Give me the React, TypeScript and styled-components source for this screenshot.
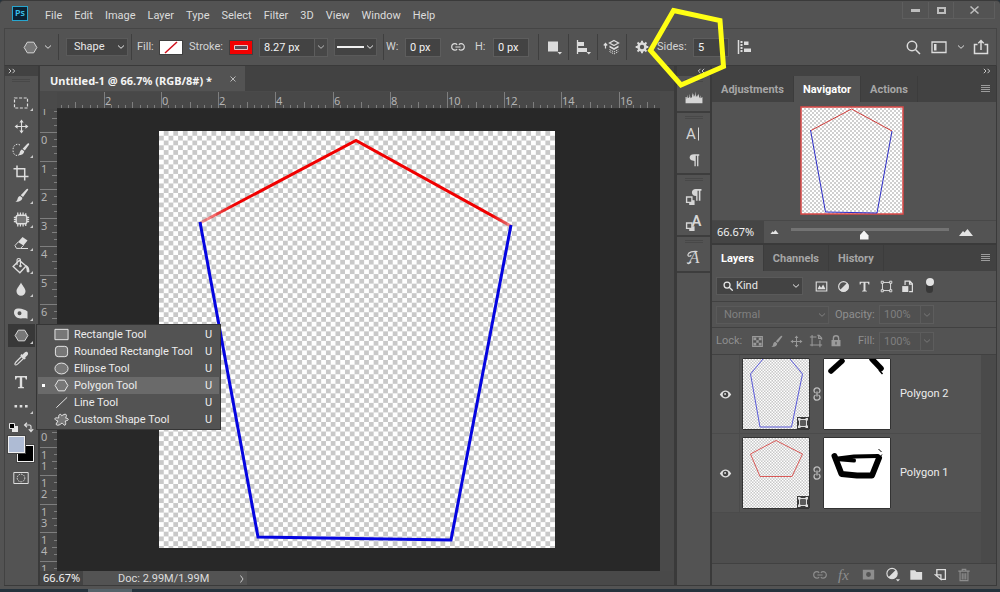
import React from "react";
import styled, { createGlobalStyle, css } from "styled-components";

const ui = `Roboto, "Noto Sans", sans-serif`;
const wide = `"Noto Sans", "Open Sans", sans-serif`;

const GlobalStyle = createGlobalStyle`
  * { box-sizing: border-box; }
  html, body { margin: 0; background: #262626; }
  body { font: 11px/16px ${ui}; color: #dcdcdc; overflow: hidden; }
  button, input, select { font: inherit; color: inherit; }
  button { padding: 0; margin: 0; border: 0; background: none; display: flex; align-items: center; justify-content: center; }
  svg { display: block; flex: none; }
`;

/* ---------- shell ---------- */
const Screen = styled.div`
  height: 100vh;
  display: flex;
  flex-direction: column;
  background: #25323c;
`;
const Taskbar = styled.div`
  flex: none;
  height: 3px;
  background: linear-gradient(90deg, #25323c 88px, #55626a 88px, #55626a 132px, #25323c 132px);
`;
const Window = styled.div`
  flex: 1;
  display: flex;
  flex-direction: column;
  min-height: 0;
  padding: 0 3px 3px 4px;
  background: #535353;
  border-top: 1px solid #3a3a3a;
  border-radius: 4px 4px 0 0;
`;
const MenuBar = styled.header`
  flex: none;
  height: 27px;
  display: flex;
  align-items: center;
  padding-left: 8px;
`;
const Logo = styled.div`
  width: 16px;
  height: 15px;
  margin: 0 17px 3px 0;
  border: 1px solid #27a6cf;
  background: #0b2233;
  color: #3cc1ea;
  font: 600 9px/12px ${wide};
  text-align: center;
`;
const Menus = styled.nav`
  display: flex;
  gap: 12px;
  padding-top: 2px;
`;
const MenuButton = styled.button`
  line-height: 18px;
`;
const WindowButtons = styled.div`
  margin: 0 2px 8px auto;
  display: flex;
  border: 1px solid #5e5e5e;
  border-top: 0;
`;
const WindowButton = styled.button<{ $w: number }>`
  width: ${(p) => p.$w}px;
  height: 16px;
  color: #bdbdbd;
  & + & { border-left: 1px solid #5e5e5e; }
`;

/* ---------- options bar ---------- */
const OptionsBar = styled.div`
  flex: none;
  height: 38px;
  display: flex;
  align-items: center;
  border: 1px solid #454545;
  border-bottom-color: #3a3a3a;
`;
const Cell = styled.div<{ $w: number; $pad?: number; $divided?: boolean; $center?: boolean }>`
  flex: none;
  width: ${(p) => p.$w}px;
  height: 26px;
  display: flex;
  align-items: center;
  padding-left: ${(p) => p.$pad ?? 0}px;
  ${(p) => p.$center && css`justify-content: center;`}
  ${(p) => p.$divided && css`border-right: 1px solid #3f3f3f;`}
`;
const Label = styled.label<{ $w?: number; $dim?: boolean }>`
  flex: none;
  ${(p) => p.$w && css`width: ${p.$w}px;`}
  color: ${(p) => (p.$dim ? "#8f8f8f" : "#d4d4d4")};
`;
const Swatch = styled.button<{ $gap: number }>`
  width: 24px;
  height: 15px;
  margin-right: ${(p) => p.$gap}px;
  border: 1px solid #3f3f3f;
`;
const Field = styled.input<{ $w: number; $dim?: boolean }>`
  width: ${(p) => p.$w}px;
  height: 19px;
  padding: 0 0 0 4px;
  border: 1px solid ${(p) => (p.$dim ? "#5c5c5c" : "#5d5d5d")};
  background: ${(p) => (p.$dim ? "#505050" : "#434343")};
  color: ${(p) => (p.$dim ? "#7f7f7f" : "#f2f2f2")};
  border-radius: 0;
  outline: 0;
`;
const StepButton = styled.button<{ $dim?: boolean }>`
  width: 13px;
  height: 19px;
  border: 1px solid #5d5d5d;
  border-left: 0;
  background: ${(p) => (p.$dim ? "#505050" : "#474747")};
  color: ${(p) => (p.$dim ? "#777" : "#b8b8b8")};
`;
const SelectBox = styled.span<{ $w: number; $dim?: boolean }>`
  display: grid;
  grid-template-columns: 1fr 10px;
  align-items: center;
  flex: none;
  width: ${(p) => p.$w}px;
  height: 18px;
  border: 1px solid #5a5a5a;
  background: ${(p) => (p.$dim ? "#505050" : "#434343")};
  color: ${(p) => (p.$dim ? "#808080" : "#e8e8e8")};
  > * { grid-row: 1; }
  > svg { grid-column: 2; pointer-events: none; }
  > svg.lead { grid-column: 1; margin-left: 6px; }
  > svg.line { grid-column: 1; margin-left: 2px; }
`;
const Select = styled.select<{ $pad: number }>`
  grid-column: 1 / 3;
  width: 100%;
  height: 16px;
  padding: 0 0 0 ${(p) => p.$pad}px;
  border: 0;
  background: transparent;
  appearance: none;
  outline: 0;
`;
const RightTools = styled.div`
  margin-left: auto;
  padding-right: 5px;
  display: flex;
  align-items: center;
  gap: 6px;
`;
const Callout = styled.svg`
  position: absolute;
  left: -10px;
  top: -37px;
  z-index: 5;
  pointer-events: none;
`;
const CalloutAnchor = styled.div`
  position: relative;
  display: flex;
  align-items: center;
`;

/* ---------- columns ---------- */
const Workspace = styled.main`
  flex: 1;
  display: flex;
  min-height: 0;
  background: #3a3a3a;
  border-bottom: 1px solid #3a3a3a;
`;
const ColumnHead = styled.div<{ $right?: boolean }>`
  flex: none;
  height: 10px;
  display: flex;
  align-items: center;
  justify-content: ${(p) => (p.$right ? "flex-end" : "flex-start")};
  padding: 0 5px 0 3px;
  background: #424242;
  color: #c8c8c8;
`;
const ToolColumn = styled.aside`
  flex: none;
  width: 34px;
  margin-right: 2px;
  background: #535353;
  border-left: 1px solid #424242;
`;
const Grip = styled.div<{ $m?: string }>`
  width: 18px;
  height: 3px;
  margin: ${(p) => p.$m ?? "3px auto 0"};
  border: solid #484848;
  border-width: 1px 0;
`;
const ToolGroups = styled.div`
  display: flex;
  flex-direction: column;
  gap: 1px;
  margin-top: 9px;
`;
const ToolSlot = styled.div<{ $active?: boolean; $more?: boolean }>`
  position: relative;
  width: 27px;
  height: 23px;
  margin-left: 3px;
  background: ${(p) => (p.$active ? "#383838" : "transparent")};
  color: #dedede;
  ${(p) => p.$more && css`
    &::after {
      content: "";
      position: absolute;
      right: 2px;
      bottom: 3px;
      border: solid #c9c9c9;
      border-width: 0 0 3px 3px;
      border-left-color: transparent;
    }
  `}
`;
const ToolButton = styled.button`
  width: 26px;
  height: 23px;
`;
const Flyout = styled.div`
  position: absolute;
  z-index: 4;
  left: 28px;
  top: 0;
  width: 185px;
  padding: 1px;
  background: #535353;
  border: 1px solid #353535;
`;
const FlyoutItem = styled.button<{ $on?: boolean }>`
  width: 100%;
  height: 17px;
  display: grid;
  grid-template-columns: 16px 20px 1fr 14px;
  justify-items: start;
  background: ${(p) => (p.$on ? "#6a6a6a" : "transparent")};
  color: #ececec;
`;
const Dot = styled.i<{ $on?: boolean }>`
  width: 3px;
  height: 3px;
  margin-left: 4px;
  background: ${(p) => (p.$on ? "#fff" : "transparent")};
`;
const ColorArea = styled.div`
  padding: 5px 0 0 3px;
  color: #dedede;
`;
const MiniRow = styled.div`
  display: flex;
  gap: 4px;
  margin: 0 0 3px;
`;
const Colors = styled.div`
  display: grid;
  grid-template: repeat(2, 9px) / repeat(2, 9px);
  margin-bottom: 16px;
`;
const ColorChip = styled.button<{ $c: string; $back?: boolean }>`
  width: 17px;
  height: 17px;
  border: 1px solid #f0f0f0;
  outline: 1px solid #444;
  background: ${(p) => p.$c};
  grid-area: ${(p) => (p.$back ? "2 / 2" : "1 / 1")};
  z-index: ${(p) => (p.$back ? 0 : 1)};
`;

/* ---------- document ---------- */
const DocumentColumn = styled.section`
  flex: 1;
  min-width: 0;
  display: flex;
  flex-direction: column;
  background: #494949;
`;
const DocTabs = styled.div`
  flex: none;
  height: 25px;
  display: flex;
  background: #424242;
`;
const DocTab = styled.button`
  height: 25px;
  padding: 4px 9px 0 10px;
  gap: 18px;
  background: #535353;
  color: #f4f4f4;
  font: 700 11px/16px ${wide};
  > svg { margin-bottom: 4px; }
`;
const View = styled.div`
  flex: 1;
  min-height: 0;
  display: grid;
  grid-template: 17px minmax(0, 1fr) / 17px minmax(0, 1fr) 14px;
  background: #4a4a4a;
  padding-top: 1px;
  overflow: hidden;
`;
const RulerBox = styled.div<{ $vertical?: boolean }>`
  overflow: hidden;
  min-width: 0;
  min-height: 0;
  background: #484848;
  ${(p) => (p.$vertical ? css`grid-area: 2 / 1;` : css`grid-area: 1 / 2;`)}
  text { font: 11px ${wide}; fill: #b4b4b4; }
`;
const Pasteboard = styled.div`
  grid-area: 2 / 2;
  min-height: 0;
  background: #282828;
  overflow: hidden;
  padding: 22px 0 0 102px;
`;
const StatusBar = styled.footer`
  flex: none;
  height: 14px;
  display: flex;
  align-items: center;
  line-height: 14px;
  background: #494949;
`;
const ZoomValue = styled.span`
  width: 43px;
  padding-left: 3px;
  background: #434343;
  color: #f2f2f2;
  font-family: ${wide};
  white-space: nowrap;
`;
const DocInfo = styled.button`
  width: 164px;
  height: 14px;
  padding: 2px 3px 0 35px;
  justify-content: space-between;
  background: #535353;
`;

/* ---------- right side ---------- */
const IconColumn = styled.aside`
  flex: none;
  width: 33px;
  margin: 0 2px 0 3px;
  background: #535353;
`;
const IconGroup = styled.div<{ $h: number }>`
  display: flow-root;
  height: ${(p) => p.$h}px;
  border-bottom: 2px solid #3d3d3d;
  color: #d6d6d6;
`;
const IconButton = styled.button<{ $h?: number; $w?: number; $dim?: boolean }>`
  width: ${(p) => (p.$w ? p.$w + "px" : "100%")};
  height: ${(p) => p.$h ?? 26}px;
  ${(p) => p.$dim && css`color: #8d8d8d;`}
`;
const Panels = styled.aside`
  flex: none;
  width: 284px;
  display: flex;
  flex-direction: column;
  margin-right: 1px;
`;
const PanelTabs = styled.div`
  flex: none;
  height: 26px;
  display: flex;
  background: #424242;
  > svg { margin: 9px 6px 0 auto; }
`;
const PanelTab = styled.button<{ $on?: boolean }>`
  height: 26px;
  padding: 2px 9px 0;
  font-weight: 700;
  color: ${(p) => (p.$on ? "#fff" : "#a6a6a6")};
  background: ${(p) => (p.$on ? "#535353" : "transparent")};
  border-right: 1px solid #3c3c3c;
`;
const NavBody = styled.div`
  flex: none;
  height: 118px;
  padding-top: 4px;
  display: flex;
  justify-content: center;
  background: #535353;
  > svg { margin-right: 5px; }
`;
const NavFoot = styled.div`
  flex: none;
  height: 23px;
  display: flex;
  align-items: center;
  background: #535353;
  border-top: 1px solid #484848;
  margin-bottom: 2px;
  color: #e0e0e0;
`;
const NavZoom = styled.span`
  width: 52px;
  height: 22px;
  padding-left: 5px;
  font-family: ${wide};
  line-height: 22px;
  background: #454545;
  color: #f2f2f2;
`;
const Slider = styled.input`
  width: 158px;
  height: 16px;
  margin: 0 9px 0 7px;
  appearance: none;
  background: linear-gradient(#737373, #737373) 0 4px / 100% 3px no-repeat;
  &::-webkit-slider-thumb {
    appearance: none;
    width: 9px;
    height: 9px;
    margin-top: 6px;
    background: #f4f4f4;
    clip-path: polygon(50% 0, 100% 55%, 100% 100%, 0 100%, 0 55%);
  }
`;
const LayerBar = styled.div<{ $h: number }>`
  flex: none;
  height: ${(p) => p.$h}px;
  display: flex;
  align-items: center;
  padding-left: 4px;
  background: #535353;
  border-bottom: 1px solid #414141;
`;
const FilterIcons = styled.div`
  display: flex;
  gap: 6px;
  margin-left: 11px;
  color: #dedede;
`;
const LockIcons = styled.div`
  width: 93px;
  display: flex;
  justify-content: space-between;
  margin-right: 15px;
  color: #9a9a9a;
`;
const Toggle = styled.button`
  width: 7px;
  height: 15px;
  margin: 0 0 2px 11px;
  border-radius: 4px;
  background: #383838;
  align-items: flex-start;
  &::before { content: ""; flex: none; width: 8px; height: 8px; border-radius: 4px; background: #e2e2e2; }
`;
const LayerList = styled.div`
  flex: 1;
  min-height: 0;
  padding-right: 15px;
  background: linear-gradient(270deg, #4a4a4a 15px, #4e4e4e 15px);
`;
const LayerRow = styled.div`
  height: 79px;
  display: flex;
  align-items: center;
  background: #535353;
  border-bottom: 1px solid #4b4b4b;
`;
const Eye = styled.button`
  width: 28px;
  height: 78px;
  border-right: 1px solid #4b4b4b;
`;
const Thumb = styled.div<{ $ml?: number }>`
  position: relative;
  width: 68px;
  height: 72px;
  margin-left: ${(p) => p.$ml ?? 0}px;
  border: 1px solid #333;
  border-radius: 1px;
  background: #fff;
`;
const Badge = styled.span`
  position: absolute;
  right: 0;
  bottom: 0;
  width: 12px;
  height: 12px;
  background: #3a3a3a;
  color: #dedede;
`;
const LayerName = styled.span`
  margin-left: 9px;
  color: #ececec;
`;
const LayerFoot = styled.div`
  flex: none;
  height: 22px;
  display: flex;
  align-items: center;
  justify-content: flex-end;
  padding-right: 20px;
  background: #535353;
  border-top: 1px solid #414141;
  color: #dedede;
`;

/* ---------- icons ---------- */
type IconProps = { s?: number; w?: number; className?: string; children: React.ReactNode };
const Icon = ({ s = 16, w = 1, className, children }: IconProps) => (
  <svg className={className} width={s} height={s} viewBox="0 0 16 16" fill="none" stroke="currentColor" strokeWidth={w}>
    {children}
  </svg>
);
const Chevron = () => (
  <svg width="8" height="6" viewBox="0 0 8 6" fill="none" stroke="currentColor"><path d="M1 1.5 4 4.3 7 1.5" /></svg>
);
const Double = ({ left }: { left?: boolean }) => (
  <svg width="8" height="6" viewBox="0 0 8 6" fill="none" stroke="currentColor">
    <path d={left ? "M7.2.8 5 3l2.200 2.200M3.500.8 1.300 3l2.200 2.200" : "M.8.8 3 3 .8 5.200M4.500.8 6.700 3 4.500 5.200"} />
  </svg>
);
const Burger = () => (
  <svg width="9" height="8" viewBox="0 0 9 8" stroke="#9c9c9c"><path d="M0 .5h9M0 2.5h9M0 4.5h9M0 6.5h9" /></svg>
);
const Hexagon = ({ s = 16 }: { s?: number }) => (
  <Icon s={s}><path d="M4.600 2.300h6.800L14.800 8l-3.400 5.700H4.600L1.200 8z" fill="#777" /></Icon>
);
const MoveIcon = ({ s = 16 }: { s?: number }) => (
  <Icon s={s} w={1.2}><path d="M8 2v12M2 8h12" /><path d="M8 .6 10.3 3.8H5.7zM8 15.4l2.3-3.2H5.7zM.6 8l3.2-2.3v4.6zM15.4 8l-3.2-2.3v4.6z" fill="currentColor" stroke="none" /></Icon>
);
const BrushIcon = ({ s = 16 }: { s?: number }) => (
  <Icon s={s}><path d="M14.8 1c.5.4.4.8 0 1.5L9.6 9.6 7.2 7.7 13 1.6c.7-.7 1.300-1 1.800-.6zM6.500 8.400l2.400 2c0 2.500-2.500 4.600-7.400 4.300 2-.8 2-2 2.500-3.700.4-1.500 1.300-2.300 2.500-2.600z" fill="currentColor" stroke="none" /></Icon>
);
const LinkIcon = ({ s = 14 }: { s?: number }) => (
  <Icon s={s} w={1.400}><path d="M7 5.500C6.300 4.600 5.500 4.200 4.500 4.200a3.600 3.600 0 0 0 0 7.400c1 0 1.800-.4 2.500-1.300M9 5.500c.7-.9 1.500-1.300 2.500-1.300a3.600 3.600 0 0 1 0 7.400c-1 0-1.800-.4-2.500-1.300M5 8h6" /></Icon>
);
const LayerLink = () => (
  <svg width="8" height="14" viewBox="0 0 8 14" fill="none" stroke="#bdbdbd" strokeWidth="1.300">
    <path d="M2.500 6C1.500 5.500 1 4.800 1 3.800a3 3 0 0 1 6 0C7 4.800 6.500 5.500 5.500 6M2.500 8C1.500 8.500 1 9.200 1 10.200a3 3 0 0 0 6 0c0-1-.5-1.700-1.500-2.200M4 4.500v5" />
  </svg>
);
const TypeIcon = ({ s = 16 }: { s?: number }) => (
  <Icon s={s}><path d="M2 2h12v3.600h-1.200c-.2-1.500-.6-2.100-2-2.100H9.200v8.600c0 .9.400 1.100 1.800 1.200v.9H5v-.9c1.400-.1 1.800-.3 1.800-1.200V3.500H5.200c-1.400 0-1.800.6-2 2.100H2z" fill="currentColor" stroke="none" /></Icon>
);
const FrameIcon = ({ s = 14 }: { s?: number }) => (
  <Icon s={s} w={1.200}><path d="M3 3h10v10H3z" /><path d="M1.500 1.500h2.600v2.600H1.500zM11.900 1.500h2.600v2.600h-2.600zM1.500 11.900h2.600v2.600H1.500zM11.900 11.900h2.600v2.600h-2.600z" fill="#535353" /></Icon>
);
const BadgeFrame = () => (
  <svg width="12" height="12" viewBox="0 0 12 12" fill="none" stroke="currentColor">
    <path d="M2.500 2.500h7v7h-7z" fill="#5a5a5a" />
    <path d="M1 1h2.500v2.500H1zM8.500 1H11v2.500H8.500zM1 8.500h2.500V11H1zM8.500 8.500H11V11H8.500z" fill="currentColor" stroke="none" />
  </svg>
);
const AdjustIcon = ({ s = 14 }: { s?: number }) => (
  <Icon s={s} w={1.400}><circle cx="8" cy="8" r="6" /><path d="M12.600 3.400A6.500 6.500 0 1 1 3.400 12.600z" fill="currentColor" stroke="none" /></Icon>
);
const EyeIcon = () => (
  <Icon s={13}><path d="M1 8C3 4.500 5.500 3 8 3s5 1.500 7 5c-2 3.500-4.500 5-7 5s-5-1.500-7-5z" fill="#e2e2e2" stroke="none" /><circle cx="8" cy="8" r="3.400" fill="#444" stroke="none" /><circle cx="7.500" cy="7.300" r="1.200" fill="#ddd" stroke="none" /></Icon>
);
const LassoBrush = () => (
  <svg width="18" height="16" viewBox="0 0 18 16" fill="none" stroke="currentColor">
    <path d="M8 3C5 1 1 3 1 8s3.500 6.500 6 4.800" strokeDasharray="1.500 1.300" />
    <path d="M17 1.500c.4.500.2 1-.2 1.600l-4 5.400-2.200-1.700 4.700-5c.6-.6 1.200-.8 1.700-.3zM10 7.500l2.200 1.800c-.2 2.700-2.300 4-6.200 3.900 1.400-.8 1.400-1.800 1.800-3 .4-1.500 1.200-2.400 2.200-2.700z" fill="currentColor" stroke="none" />
  </svg>
);
const CropIcon = () => <Icon w={1.500}><path d="M4 .5v11h11.500M.5 3.700h11.200V15.500" /></Icon>;
const PatchIcon = () => (
  <Icon s={17}><rect x="3" y="4" width="10" height="8" rx="2" fill="#777" strokeWidth="1.300" /><path d="M4.500 1.500V4M7 1.500V4M9.500 1.500V4M12 2v2M4.500 12v2.500M7 12v2.500M9.500 12v2.500M12 12v2M.8 6H3M.8 8H3M.8 10H3M13 6h2.200M13 8h2.200M13 10h2.200" strokeWidth="1.200" /></Icon>
);
const EraserIcon = () => (
  <Icon><path d="M9.500 2 14.500 5.500 10.500 10.500 5 7z" fill="currentColor" stroke="none" /><path d="M5.200 7 2 10.500l1.500 2.900h4l3-3" /><path d="M7.500 13.500H15" /></Icon>
);
const BucketIcon = () => (
  <Icon s={18}><path d="M6.500 3 12.500 8 7 14 1 8.500z" strokeWidth="1.200" /><path d="M7.500 8V2.500c0-1.500-3-1.500-3 0V7" /><path d="M12 7c3 1 3.500 3 3.500 6-1.200 1.500-2.800.5-2.500-1.500z" fill="currentColor" stroke="none" /><circle cx="7.500" cy="8" r="1.200" fill="currentColor" stroke="none" /></Icon>
);
const DropIcon = () => <Icon><path d="M8 1.500c.8 2.600 4.500 5.500 4.500 8.800a4.500 4.500 0 0 1-9 0C3.500 7 7.200 4.100 8 1.500z" fill="currentColor" stroke="none" /></Icon>;
const SpongeIcon = () => <Icon><path fillRule="evenodd" d="M1 7.500C1 4.500 3 3 6 3.500c3 .4 6.500 1 8.500 3v7.300c-2-.8-4-.5-6.500-.4C4 13.500 1 11 1 7.500zM6.500 6.300a2 2 0 1 0 0 4 2 2 0 0 0 0-4z" fill="currentColor" stroke="none" /></Icon>;
const DropperIcon = () => (
  <Icon><path d="M8.500 5.500 3 11c-.5.600-1.500 2-1 2.700.6.600 2.200-.3 2.800-.8l5.700-5.500z" strokeWidth="1.200" /><path d="M14.500 1.300c1 1 .6 2.300-.3 3.200l-2 2 .6.800-1.300 1.200L7.300 4.400l1.200-1.300.9.700 2-2c.9-.9 2.200-1.400 3.100-.5z" fill="currentColor" stroke="none" /></Icon>
);
const DotsIcon = () => <Icon><path d="M1.500 7h2.600v2.500H1.500zM6.700 7h2.600v2.500H6.700zM12 7h2.600v2.500H12z" fill="currentColor" stroke="none" /></Icon>;
const GearIcon = () => (
  <Icon s={14}><circle cx="8" cy="8" r="4" strokeWidth="3" /><path d="M8 .8V4M8 12v3.200M.8 8H4M12 8h3.200M2.900 2.900 5 5M11 11l2.100 2.100M13.100 2.900 11 5M5 11l-2.100 2.100" strokeWidth="2.200" /></Icon>
);
const SubMark = () => <path d="M11.500 13h4.500l-2.200 2.500z" fill="currentColor" stroke="none" />;
const Italic = ({ s, children, dx = 0 }: { s: number; dx?: number; children: string }) => (
  <text x={dx} y="13" stroke="none" fill="currentColor" fontSize={s} fontFamily="Liberation Serif, serif" fontStyle="italic">{children}</text>
);
const StyleChip = () => <><path d="M4.500 12h4v4h-4z" fill="currentColor" /><path d="M1.500 8.500h5v5h-5z" fill="#535353" strokeWidth="1.300" /></>;

const tools: { name: string; icon: React.ReactNode; more?: boolean }[][] = [
  [{ name: "Marquee", more: true, icon: <Icon><rect x="1.500" y="3" width="13" height="10" strokeDasharray="3 1.600" strokeWidth="1.200" /></Icon> }],
  [
    { name: "Move", icon: <MoveIcon s={15} /> },
    { name: "Quick Selection", more: true, icon: <LassoBrush /> },
    { name: "Crop", icon: <CropIcon /> },
    { name: "Brush", more: true, icon: <BrushIcon s={15} /> },
  ],
  [
    { name: "Patch", more: true, icon: <PatchIcon /> },
    { name: "Eraser", more: true, icon: <EraserIcon /> },
    { name: "Paint Bucket", more: true, icon: <BucketIcon /> },
    { name: "Blur", more: true, icon: <DropIcon /> },
  ],
  [
    { name: "Sponge", more: true, icon: <SpongeIcon /> },
    { name: "Polygon", more: true, icon: <Hexagon s={15} /> },
    { name: "Eyedropper", icon: <DropperIcon /> },
    { name: "Type", icon: <TypeIcon /> },
  ],
  [{ name: "More tools", more: true, icon: <DotsIcon /> }],
];

const shapeTools: { name: string; icon: React.ReactNode; on?: boolean }[] = [
  { name: "Rectangle Tool", icon: <Icon s={15}><path d="M1 2.500h14v11H1z" fill="#777" /></Icon> },
  { name: "Rounded Rectangle Tool", icon: <Icon s={15}><rect x="1.500" y="2.500" width="13" height="11" rx="3" fill="#777" /></Icon> },
  { name: "Ellipse Tool", icon: <Icon s={15}><ellipse cx="8" cy="8" rx="7" ry="5.800" fill="#777" /></Icon> },
  { name: "Polygon Tool", icon: <Hexagon s={15} />, on: true },
  { name: "Line Tool", icon: <Icon s={15}><path d="M2.500 13.500 14 2.500" /></Icon> },
  { name: "Custom Shape Tool", icon: <Icon s={15}><path d="M5 4.500c0-2 2.500-3 3.200-.5 1.300-.7 3.500-2.500 4.800-1.200 1 1-.5 2.400-.5 3.700 2 0 3 .8 2.600 1.900-.5 1-2.300.7-3.100 1.200.5 2 1 4.400-.5 4.500-1.300 0-1.800-1.800-3-2.300-1.500 1.500-4.500 3.200-6 1.800-.9-1 1-2.500 1.700-4C2.500 9.200.8 8.300 1 7c.4-1.500 2.500-.6 4-.6z" fill="#777" /></Icon> },
];

const menus = ["File", "Edit", "Image", "Layer", "Type", "Select", "Filter", "3D", "View", "Window", "Help"];

/* ---------- drawings ---------- */
const Checker = ({ id, p, c = "#c9c9c9" }: { id: string; p: number; c?: string }) => (
  <pattern id={id} width={p} height={p} patternUnits="userSpaceOnUse">
    <rect width={p} height={p} fill="#fff" />
    <path d={`M${p / 2} 0h${p / 2}v${p / 2}h-${p / 2}zM0 ${p / 2}h${p / 2}v${p / 2}H0z`} fill={c} />
  </pattern>
);

const unit = 28.6;
const topLabels = [2, 0, 2, 4, 6, 8, 10, 12, 14, 16];
const sideLabels = ["1", "0", "1", "2", "3", "4", "5", "6", "7", "8", "9", "10", "11", "12", "13", "14", "1"];
const HRuler = () => (
  <svg width="1600" height="17" stroke="#7e7e7e">
    {Array.from({ length: 230 }, (_, i) => {
      const x = Math.round(104 - 4 * unit + (i * unit) / 4) + 0.5;
      const len = i % 8 === 0 ? 17 : i % 4 === 0 ? 6 : 3;
      return <path key={i} d={`M${x} ${16 - len}V16`} />;
    })}
    {topLabels.map((n, i) => (
      <text key={i} x={Math.round(105 + (i - 1) * 2 * unit)} y="13" stroke="none">{n}</text>
    ))}
    <path d="M0 16.500h1600" stroke="#2c2c2c" />
  </svg>
);
const VRuler = () => (
  <svg width="17" height="900" stroke="#7e7e7e">
    {Array.from({ length: 124 }, (_, i) => {
      const y = Math.round(23 - unit + (i * unit) / 4) + 0.5;
      const len = i % 4 === 0 ? 17 : i % 2 === 0 ? 5 : 3;
      return <path key={i} d={`M${17 - len} ${y}H17`} />;
    })}
    {sideLabels.map((n, i) => {
      const y = Math.round(23 + (i - 1) * unit);
      return n.split("").map((d, k) => (
        <text key={`${i}-${k}`} x="1" y={y + 12 + k * 11} stroke="none">{d}</text>
      ));
    })}
  </svg>
);

const Artwork = () => (
  <svg width="396" height="417" viewBox="0 0 396 417" fill="none" strokeWidth="3">
    <defs>
      <Checker id="paper" p={9.54} />
      <linearGradient id="fade" gradientUnits="userSpaceOnUse" x1="41" x2="352" y1="0" y2="0">
        <stop offset="0" stopColor="#f00000" stopOpacity=".3" />
        <stop offset=".11" stopColor="#f00000" />
        <stop offset=".94" stopColor="#f00000" />
        <stop offset="1" stopColor="#f00000" stopOpacity=".4" />
      </linearGradient>
    </defs>
    <rect width="396" height="417" fill="url(#paper)" />
    <path d="M41 92 197 9.500 352 95" stroke="url(#fade)" />
    <path d="M41 91 99 406 292 409 352 94" stroke="#0505e0" />
  </svg>
);
const NavArt = () => (
  <svg width="104" height="109" viewBox="0 0 104 109" fill="none">
    <defs><Checker id="nav" p={4} c="#cfcfcf" /></defs>
    <rect x="1" y="1" width="102" height="107" fill="url(#nav)" stroke="#dc4a48" strokeWidth="1.500" />
    <path d="M11 24.500 51.500 3 92 25" stroke="#d23c3a" />
    <path d="M10.500 24 25.500 106 77 107 92 25" stroke="#2c2cc8" />
  </svg>
);
const ThumbArt = ({ id, d, color }: { id: string; d: string; color: string }) => (
  <svg width="66" height="70" viewBox="0 0 66 70" fill="none">
    <defs><Checker id={id} p={3} c="#c8c8c8" /></defs>
    <rect width="66" height="70" fill={`url(#${id})`} />
    <path d={d} stroke={color} />
  </svg>
);
const MaskArt = ({ children }: { children: React.ReactNode }) => (
  <svg width="66" height="70" viewBox="0 0 66 70" fill="none" stroke="#000" strokeLinejoin="round">
    {children}
  </svg>
);

const layers = [
  {
    name: "Polygon 2",
    art: <ThumbArt id="t2" color="#5a5ad8" d="M20 0 7.500 15 17 68h31.500L59.500 15 47 0" />,
    mask: (
      <MaskArt>
        <path d="M7 12 18 2" strokeWidth="5.500" strokeLinecap="round" />
        <path d="M48 0 57 9.500" strokeWidth="5.500" strokeLinecap="round" />
        <path d="M55 11l3.500 4" strokeWidth="1.500" />
      </MaskArt>
    ),
  },
  {
    name: "Polygon 1",
    art: <ThumbArt id="t1" color="#d85a58" d="M33 2.500 59.500 16 49 38.500H17L7.500 16z" />,
    mask: (
      <MaskArt>
        <path d="M10.500 18 17.500 36 33 37.500 48 37.500 55 20" strokeWidth="6" strokeLinecap="round" />
        <path d="M12 21 30 22.500M14 20.500 30 18.500 54 18" strokeWidth="4" strokeLinecap="round" />
        <path d="M54.500 11l3 3M56 19l2-2.500" strokeWidth="1" />
      </MaskArt>
    ),
  },
];

/* ---------- sections ---------- */
const Options = () => (
  <OptionsBar>
    <Cell $w={54} $pad={12} $divided>
      <IconButton $w={27} aria-label="Tool preset">
        <Hexagon s={15} />
      </IconButton>
      <Chevron />
    </Cell>
    <Cell $w={73} $pad={7} $divided>
      <SelectBox $w={62}>
        <Select $pad={7} aria-label="Tool mode"><option>Shape</option></Select>
        <Chevron />
      </SelectBox>
    </Cell>
    <Cell $w={252} $pad={5} $divided>
      <Label $w={22} htmlFor="fill">Fill:</Label>
      <Swatch id="fill" $gap={6}>
        <svg width="22" height="13" viewBox="0 0 22 13"><path d="M0 0h22v13H0z" fill="#fff" /><path d="M5 12 17 1" stroke="#d0101c" strokeWidth="1.500" /></svg>
      </Swatch>
      <Label $w={40} htmlFor="stroke">Stroke:</Label>
      <Swatch id="stroke" $gap={6}>
        <svg width="22" height="13" viewBox="0 0 22 13"><path d="M0 0h22v13H0z" fill="#f20000" /><path d="M4.500 4.500h13v4h-13z" fill="#5b4b55" stroke="#e8c8c8" /></svg>
      </Swatch>
      <Field $w={56} aria-label="Stroke width" defaultValue="8.27 px" />
      <StepButton aria-label="Stroke width list"><Chevron /></StepButton>
      <Cell $w={49} $pad={6}>
        <SelectBox $w={43}>
          <svg className="line" width="27" height="2" viewBox="0 0 27 2"><path d="M0 0h27v2H0z" fill="#f0f0f0" /></svg>
          <Select $pad={40} aria-label="Stroke style"><option></option></Select>
          <Chevron />
        </SelectBox>
      </Cell>
    </Cell>
    <Cell $w={155} $pad={2} $divided>
      <Label $w={19} htmlFor="w">W:</Label>
      <Field id="w" $w={36} defaultValue="0 px" />
      <IconButton $w={34} aria-label="Link dimensions"><LinkIcon /></IconButton>
      <Label $w={18} htmlFor="h">H:</Label>
      <Field id="h" $w={36} defaultValue="0 px" />
    </Cell>
    <Cell $w={30} $divided $center>
      <IconButton aria-label="Path operations"><Icon><path d="M2 2.500h10v10H2z" fill="currentColor" stroke="none" /><SubMark /></Icon></IconButton>
    </Cell>
    <Cell $w={29} $divided $center>
      <IconButton aria-label="Path alignment"><Icon><path d="M2.500 1v14" strokeWidth="1.300" /><path d="M3 3h6v4H3zM3 9h9v4H3z" fill="currentColor" stroke="none" /><SubMark /></Icon></IconButton>
    </Cell>
    <Cell $w={29} $divided $center>
      <IconButton aria-label="Path arrangement">
        <svg width="18" height="16" viewBox="0 0 18 16" fill="none" stroke="currentColor">
          <path d="M2.500 4.500v5M.8 6.500l1.700-2 1.700 2" strokeWidth="1.200" />
          <path d="M11 1.500 15.500 4 11 6.500 6.500 4z" strokeWidth="1.300" />
          <path d="M6.500 6.500 11 9l4.500-2.500v2L11 11 6.500 8.500z" fill="currentColor" stroke="none" />
          <path d="M6.500 10.500 11 13l4.500-2.500M6.500 12.500 11 15l4.500-2.500" strokeDasharray="1.500 1" />
        </svg>
      </IconButton>
    </Cell>
    <Cell $w={30} $center>
      <IconButton aria-label="Path options"><GearIcon /></IconButton>
    </Cell>
    <CalloutAnchor>
      <Label $w={36} htmlFor="sides">Sides:</Label>
      <Field id="sides" $w={36} defaultValue="5" />
      <Callout width="84" height="90" viewBox="0 0 84 90" fill="none" stroke="#ffff14" strokeWidth="5">
        <path d="M26.500 9.500 73 19.500 76.500 65.500 34 84 3.500 49.500z" />
      </Callout>
    </CalloutAnchor>
    <IconButton $w={30} aria-label="Align edges">
      <Icon><path d="M2.500 1v14" strokeWidth="1.500" /><path d="M5.500 2v12" strokeDasharray="2 1" strokeWidth="2" /><path d="M8 2.500h4.500v3.500H8zM8 9.500h7V13H8z" fill="currentColor" stroke="none" /></Icon>
    </IconButton>
    <RightTools>
      <IconButton $w={16} aria-label="Search"><Icon w={1.500}><circle cx="7" cy="7" r="4.700" /><path d="m10.500 10.500 4.500 4.500" /></Icon></IconButton>
      <IconButton $w={24} aria-label="Workspace"><Icon><path d="M1 3h14v10.500H1z" strokeWidth="1.300" /><path d="M3 5h2.500v6.500H3z" fill="currentColor" stroke="none" /></Icon></IconButton>
      <Chevron />
      <IconButton $w={20} aria-label="Share"><Icon w={1.500}><path d="M4.500 5.500H1.500v9h13v-9h-3M8 11V1.500M5.300 4.200 8 1.500l2.700 2.700" /></Icon></IconButton>
    </RightTools>
  </OptionsBar>
);

const Tools = () => (
  <ToolColumn>
    <ColumnHead><Double /></ColumnHead>
    <Grip $m="3px 0 0 7px" />
    <ToolGroups>
      {tools.map((g, i) => (
        <div key={i}>
          {g.map((t) => (
            <ToolSlot key={t.name} $more={t.more} $active={t.name === "Polygon"}>
              <ToolButton aria-label={t.name}>{t.icon}</ToolButton>
              {t.name === "Polygon" && (
                <Flyout>
                  {shapeTools.map((s) => (
                    <FlyoutItem key={s.name} $on={s.on}>
                      <Dot $on={s.on} />{s.icon}<span>{s.name}</span><span>U</span>
                    </FlyoutItem>
                  ))}
                </Flyout>
              )}
            </ToolSlot>
          ))}
        </div>
      ))}
    </ToolGroups>
    <ColorArea>
      <MiniRow>
        <IconButton $w={11} $h={11} aria-label="Default colors"><svg width="11" height="11" viewBox="0 0 11 11"><path d="M4 4h6v6H4z" fill="#e6e6e6" /><path d="M1.500 1.500h5v5h-5z" fill="#000" stroke="#e6e6e6" /></svg></IconButton>
        <IconButton $w={11} $h={11} aria-label="Swap colors"><svg width="11" height="11" viewBox="0 0 11 11" fill="none" stroke="currentColor" strokeWidth="1.200"><path d="M2 3h4.500Q8 3 8 4.500V9M4 .8 1.600 3 4 5.200M5.800 7.200 8 9.600l2.200-2.400" /></svg></IconButton>
      </MiniRow>
      <Colors>
        <ColorChip $c="#aebbd4" aria-label="Foreground color" />
        <ColorChip $c="#000" $back aria-label="Background color" />
      </Colors>
      <IconButton $w={26} $h={16} aria-label="Quick mask"><Icon><path d="M.8 2.500h14.400v11H.8z" /><circle cx="8" cy="8" r="3.800" strokeDasharray="1.500 1" /></Icon></IconButton>
    </ColorArea>
  </ToolColumn>
);

const Side = () => (
  <IconColumn>
    <ColumnHead $right><Double left /></ColumnHead>
    <IconGroup $h={37}>
      <Grip />
      <IconButton $h={30} aria-label="Histogram"><Icon s={18}><path d="M.5 13.500V8h1v2l1-4v3l1.500-1V5l1 4 1.300-1V4l1.200 4V5L9 8V2.800L10 8l1-2v2l1-3 .8 4 1-2.500V9l1.700-1v5.500z" fill="currentColor" stroke="none" /></Icon></IconButton>
    </IconGroup>
    <IconGroup $h={62}>
      <Grip />
      <IconButton $h={30} aria-label="Character"><Icon><text x="0" y="13" stroke="none" fill="currentColor" fontSize="15">A</text><path d="M12.500 1.500v13" /></Icon></IconButton>
      <IconButton $h={22} aria-label="Paragraph"><Icon s={14}><path d="M14 1.500V3h-1v12h-1.500V3H10v12H8.500V9C5 9 3 7.500 3 5.200S5 1.500 8 1.500z" fill="currentColor" stroke="none" /></Icon></IconButton>
    </IconGroup>
    <IconGroup $h={62}>
      <Grip />
      <IconButton $h={30} aria-label="Paragraph styles"><Icon s={17}><path d="M15.500 1v1.500h-1V12H13V2.500h-1.200V12h-1.300V7.500C7.800 7.500 6.500 6 6.500 4.200S8 1 10 1z" fill="currentColor" stroke="none" /><StyleChip /></Icon></IconButton>
      <IconButton $h={22} aria-label="Character styles"><Icon s={17}><text x="6" y="11" stroke="none" fill="currentColor" fontSize="14" fontWeight="600">A</text><StyleChip /></Icon></IconButton>
    </IconGroup>
    <IconGroup $h={36}>
      <Grip />
      <IconButton $h={30} aria-label="Glyphs"><Icon><Italic s={17} dx={3}>A</Italic><path d="M11.500 1.500C7 1 2.500 2 2 4.500S5 6.500 5 5M1 12.500c1 2 3 1 4-1" strokeWidth="1.200" /></Icon></IconButton>
    </IconGroup>
  </IconColumn>
);

const Mountain = ({ w }: { w: number }) => (
  <svg width={w} height={w / 2} viewBox="0 0 14 7"><path d="M0 7 4 2l1.500 1.500L8.500 0 14 7z" fill="#e4e4e4" /></svg>
);

const RightPanels = () => (
  <Panels>
    <ColumnHead $right><Double /></ColumnHead>
    <PanelTabs>
      <PanelTab>Adjustments</PanelTab><PanelTab $on>Navigator</PanelTab><PanelTab>Actions</PanelTab>
      <Burger />
    </PanelTabs>
    <NavBody><NavArt /></NavBody>
    <NavFoot>
      <NavZoom>66.67%</NavZoom>
      <IconButton $w={20} $h={20} aria-label="Zoom out"><Mountain w={9} /></IconButton>
      <Slider type="range" min="0" max="100" defaultValue="46" aria-label="Zoom" />
      <IconButton $w={16} $h={20} aria-label="Zoom in"><Mountain w={14} /></IconButton>
    </NavFoot>
    <PanelTabs>
      <PanelTab $on>Layers</PanelTab><PanelTab>Channels</PanelTab><PanelTab>History</PanelTab>
      <Burger />
    </PanelTabs>
    <LayerBar $h={31}>
      <SelectBox $w={87}>
        <Icon s={10} w={2} className="lead"><circle cx="6.500" cy="6.500" r="4.800" /><path d="m10 10 5.500 5.500" /></Icon>
        <Select $pad={19} aria-label="Layer filter"><option>Kind</option></Select>
        <Chevron />
      </SelectBox>
      <FilterIcons>
        <IconButton $w={15} $h={16} aria-label="Pixel layers"><Icon s={13}><path d="M1.500 2.500h13v11h-13z" strokeWidth="1.400" /><path d="m3 11.500 2.500-5 2 3 2.500-4 3 6z" fill="currentColor" stroke="none" /></Icon></IconButton>
        <IconButton $w={16} $h={16} aria-label="Adjustment layers"><AdjustIcon s={13} /></IconButton>
        <IconButton $w={15} $h={16} aria-label="Type layers"><TypeIcon s={13} /></IconButton>
        <IconButton $w={16} $h={16} aria-label="Shape layers"><FrameIcon s={13} /></IconButton>
        <IconButton $w={15} $h={16} aria-label="Smart objects"><Icon s={13} w={1.500}><path d="M5 6V1.500h6l3 3v9.700h-4M10.500 1.500V5H14" /><path d="M1.500 7.500h7.500v7.300H1.500z" fill="currentColor" stroke="none" /></Icon></IconButton>
      </FilterIcons>
      <Toggle aria-label="Toggle filtering" />
    </LayerBar>
    <LayerBar $h={26}>
      <SelectBox $w={113} $dim>
        <Select $pad={7} aria-label="Blend mode"><option>Normal</option></Select>
        <Chevron />
      </SelectBox>
      <Cell $w={50} $pad={6}><Label $dim htmlFor="opacity">Opacity:</Label></Cell>
      <Field $w={42} $dim id="opacity" defaultValue="100%" />
      <StepButton $dim aria-label="Opacity slider"><Chevron /></StepButton>
    </LayerBar>
    <LayerBar $h={27}>
      <Label $w={34} $dim>Lock:</Label>
      <LockIcons>
        <IconButton $w={14} $h={16} aria-label="Lock transparency"><Icon s={13} w={1.300}><path d="M2 2h12v12H2z" /><path d="M3 3h3.500v3.500H3zM9.500 3H13v3.500H9.500zM6.500 6.500h3v3h-3zM3 9.500h3.500V13H3zM9.500 9.500H13V13H9.500z" fill="currentColor" stroke="none" /></Icon></IconButton>
        <IconButton $w={14} $h={16} aria-label="Lock pixels"><BrushIcon s={13} /></IconButton>
        <IconButton $w={14} $h={16} aria-label="Lock position"><MoveIcon s={13} /></IconButton>
        <IconButton $w={14} $h={16} aria-label="Lock artboard"><Icon s={14} w={1.200}><path d="M3.500 1v13M1 3.500h7.500M1 12.500h14M12.500 7v8M9.500 1.500h2l3 3v2M11 1.500v3.500h3.500" /></Icon></IconButton>
        <IconButton $w={14} $h={16} aria-label="Lock all"><Icon s={12} w={1.800}><path d="M4.500 7V4.500a3.500 3.500 0 0 1 7 0V7" /><path fillRule="evenodd" d="M2 6.500h12V15H2zm5.200 2.500v3.500h1.600V9z" fill="currentColor" stroke="none" /></Icon></IconButton>
      </LockIcons>
      <Label $w={21} $dim htmlFor="lfill">Fill:</Label>
      <Field $w={42} $dim id="lfill" defaultValue="100%" />
      <StepButton $dim aria-label="Fill slider"><Chevron /></StepButton>
    </LayerBar>
    <LayerList>
      {layers.map((l) => (
        <LayerRow key={l.name}>
          <Eye aria-label={`Toggle ${l.name}`}><EyeIcon /></Eye>
          <Thumb $ml={2}>{l.art}<Badge><BadgeFrame /></Badge></Thumb>
          <IconButton $w={13} aria-label="Unlink mask"><LayerLink /></IconButton>
          <Thumb>{l.mask}</Thumb>
          <LayerName>{l.name}</LayerName>
        </LayerRow>
      ))}
    </LayerList>
    <LayerFoot>
      <IconButton $w={24} $h={20} $dim aria-label="Link layers"><LinkIcon /></IconButton>
      <IconButton $w={24} $h={20} $dim aria-label="Layer style"><Icon><Italic s={15} dx={2}>fx</Italic></Icon></IconButton>
      <IconButton $w={24} $h={20} $dim aria-label="Add mask"><Icon s={13}><path fillRule="evenodd" d="M1 2h14v12H1zm7 3a3 3 0 1 0 0 6 3 3 0 0 0 0-6z" fill="currentColor" stroke="none" /></Icon></IconButton>
      <IconButton $w={24} $h={20} aria-label="New adjustment layer"><Icon s={15} w={1.200}><circle cx="7.500" cy="7" r="5.500" /><path d="M11.400 3.100A5.500 5.500 0 1 1 3.600 10.900z" fill="currentColor" stroke="none" /><SubMark /></Icon></IconButton>
      <IconButton $w={24} $h={20} aria-label="New group"><Icon s={14}><path d="M1.500 2.500H7l1.500 2h6.500v9H1.500z" fill="currentColor" stroke="none" /></Icon></IconButton>
      <IconButton $w={24} $h={20} aria-label="New layer"><Icon s={13} w={1.600}><path d="M3.500 8.500V2H14v12H8.500M2 8.500h6.500V14z" /></Icon></IconButton>
      <IconButton $w={24} $h={20} $dim aria-label="Delete layer"><Icon s={14} w={1.300}><path d="M1.500 3.500h13M6 3V1.500h4V3M3.500 4v10.500h9V4M6 6v7M8 6v7M10 6v7" /></Icon></IconButton>
    </LayerFoot>
  </Panels>
);

export default function App() {
  return (
    <Screen>
      <GlobalStyle />
      <Window>
        <MenuBar>
          <Logo>Ps</Logo>
          <Menus>{menus.map((m) => <MenuButton key={m}>{m}</MenuButton>)}</Menus>
          <WindowButtons>
            <WindowButton $w={25} aria-label="Minimize"><svg width="9" height="3"><path d="M0 0h9v3H0z" fill="currentColor" /></svg></WindowButton>
            <WindowButton $w={25} aria-label="Maximize"><svg width="9" height="7"><path d="M1 1h7v5H1z" fill="none" stroke="currentColor" strokeWidth="2" /></svg></WindowButton>
            <WindowButton $w={41} aria-label="Close"><svg width="9" height="8" stroke="currentColor" strokeWidth="1.500"><path d="m.5.500 8 7M8.500.500l-8 7" /></svg></WindowButton>
          </WindowButtons>
        </MenuBar>
        <Options />
        <Workspace>
          <Tools />
          <DocumentColumn>
            <DocTabs>
              <DocTab>Untitled-1 @ 66.7% (RGB/8#) *
                <svg width="6" height="6" stroke="#b8b8b8"><path d="m.5.500 5 5M5.500.500l-5 5" /></svg>
              </DocTab>
            </DocTabs>
            <View>
              <RulerBox><HRuler /></RulerBox>
              <RulerBox $vertical><VRuler /></RulerBox>
              <Pasteboard><Artwork /></Pasteboard>
            </View>
            <StatusBar>
              <ZoomValue>66.67%</ZoomValue>
              <DocInfo>Doc: 2.99M/1.99M<svg width="4" height="8" fill="none" stroke="#c8c8c8"><path d="m.5.500 2.500 3.500L.5 7.500" /></svg></DocInfo>
            </StatusBar>
          </DocumentColumn>
          <Side />
          <RightPanels />
        </Workspace>
      </Window>
      <Taskbar />
    </Screen>
  );
}
